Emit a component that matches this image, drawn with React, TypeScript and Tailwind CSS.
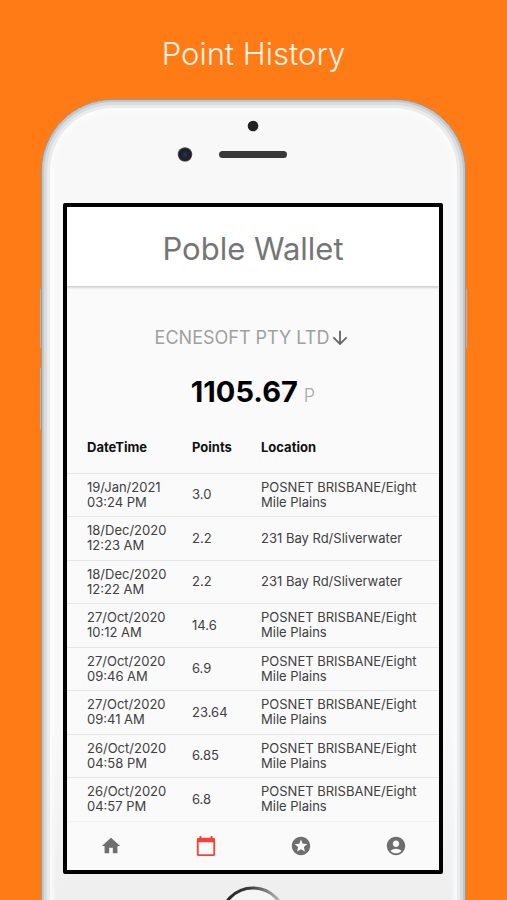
import { MdAccountCircle, MdArrowDownward, MdCalendarToday, MdHome, MdStars } from "react-icons/md";

const history = [
  { date: "19/Jan/2021", time: "03:24 PM", points: "3.0", location: "POSNET BRISBANE/Eight Mile Plains" },
  { date: "18/Dec/2020", time: "12:23 AM", points: "2.2", location: "231 Bay Rd/Sliverwater" },
  { date: "18/Dec/2020", time: "12:22 AM", points: "2.2", location: "231 Bay Rd/Sliverwater" },
  { date: "27/Oct/2020", time: "10:12 AM", points: "14.6", location: "POSNET BRISBANE/Eight Mile Plains" },
  { date: "27/Oct/2020", time: "09:46 AM", points: "6.9", location: "POSNET BRISBANE/Eight Mile Plains" },
  { date: "27/Oct/2020", time: "09:41 AM", points: "23.64", location: "POSNET BRISBANE/Eight Mile Plains" },
  { date: "26/Oct/2020", time: "04:58 PM", points: "6.85", location: "POSNET BRISBANE/Eight Mile Plains" },
  { date: "26/Oct/2020", time: "04:57 PM", points: "6.8", location: "POSNET BRISBANE/Eight Mile Plains" },
];

const tabs = [
  { label: "Home", Icon: MdHome },
  { label: "History", Icon: MdCalendarToday, active: true },
  { label: "Rewards", Icon: MdStars },
  { label: "Account", Icon: MdAccountCircle },
];

function Earpiece() {
  return (
    <svg viewBox="0 0 110 44" className="mt-[18px] mr-11 h-11 w-[110px]" aria-hidden="true">
      <defs>
        <radialGradient id="lens">
          <stop offset="0" stopColor="#26365c" />
          <stop offset="0.5" stopColor="#1c2030" />
          <stop offset="0.8" stopColor="#202024" />
          <stop offset="1" stopColor="#606468" />
        </radialGradient>
      </defs>
      <circle cx="76" cy="8" r="5.3" fill="#242324" />
      <circle cx="8" cy="36.5" r="7.3" fill="url(#lens)" />
      <rect x="42" y="33" width="68" height="7" rx="3.5" fill="#383938" />
    </svg>
  );
}

function HomeButton() {
  return (
    <svg viewBox="0 0 68 68" className="mt-3 size-[68px] shrink-0" aria-hidden="true">
      <defs>
        <linearGradient id="ring" x1="0" y1="0" x2="1" y2="0">
          <stop offset="0" stopColor="#222" />
          <stop offset="0.45" stopColor="#3a3a3a" />
          <stop offset="0.85" stopColor="#a5a5a5" />
          <stop offset="1" stopColor="#ccc" />
        </linearGradient>
      </defs>
      <circle cx="33" cy="34" r="32" fill="#f5f5f5" stroke="url(#ring)" strokeWidth="3" />
    </svg>
  );
}

function WalletScreen() {
  return (
    <div className="mr-[22px] ml-[21px] self-stretch rounded-[2px] border-4 border-black bg-[#fafafa]">
      <header className="flex h-20 items-center justify-center border-b border-[#d2d2d2] bg-white pt-1 shadow-[0_1px_2px_rgba(0,0,0,0.15)]">
        <h2 className="text-[31px] leading-9 text-[#757575]">Poble Wallet</h2>
      </header>

      <div className="flex flex-col items-center pt-[39px]">
        <button type="button" className="flex items-center text-[18px] leading-6 text-[#a0a0a0]">
          ECNESOFT PTY LTD
          <MdArrowDownward className="size-[22px] text-[#666]" />
        </button>
        <p className="mt-6 flex items-baseline gap-1.5 leading-9">
          <span className="text-[29px] font-bold text-black">1105.67</span>
          <span className="text-[18px] font-light text-[#a8a8a8]">P</span>
        </p>
      </div>

      <table className="mt-2 w-full table-fixed text-left text-[13px] leading-[15px] text-[#404040]">
        <thead>
          <tr className="h-[51px] border-b border-[#e6e6e6] text-[#111]">
            <th className="w-[125px] pl-5 font-bold">DateTime</th>
            <th className="w-[69px] font-bold">Points</th>
            <th className="font-bold">Location</th>
          </tr>
        </thead>
        <tbody>
          {history.map((row) => (
            <tr
              key={row.date + row.time}
              className="h-[43px] border-b border-[#e6e6e6] last:border-[#f1f1f1] even:h-[44px]"
            >
              <td className="pl-5">
                {row.date}
                <br />
                {row.time}
              </td>
              <td>{row.points}</td>
              <td className="pr-5">{row.location}</td>
            </tr>
          ))}
        </tbody>
      </table>

      <nav className="-mx-1 grid h-12 grid-cols-4">
        {tabs.map(({ label, Icon, active }) => (
          <button
            key={label}
            type="button"
            aria-label={label}
            className={`flex items-center justify-center ${active ? "text-[#f44336]" : "text-[#6e6e6e]"}`}
          >
            <Icon className="size-[22px]" />
          </button>
        ))}
      </nav>
    </div>
  );
}

export default function App() {
  return (
    <main className="flex h-screen flex-col overflow-hidden bg-[#ff7b15] font-['Inter',sans-serif]">
      <h1 className="pt-9 text-center text-[31px] leading-9 font-light text-[#fff3e6]">Point History</h1>

      <div className="relative mx-[41px] mt-[27px] h-[900px] shrink-0">
        {/* side buttons */}
        <span className="absolute top-[189px] -left-px h-[61px] w-1 rounded-sm bg-[#b9b3ae]" />
        <span className="absolute top-[268px] -left-px h-[63px] w-1 rounded-sm bg-[#b9b3ae]" />
        <span className="absolute top-[189px] -right-px h-[61px] w-1 rounded-sm bg-[#b9b3ae]" />

        <div className="relative flex h-full flex-col items-center rounded-[72px] border border-[#96989a] bg-linear-to-b from-[#f8f8f8] from-70% to-[#eeeeee] to-90% shadow-[inset_0_0_0_2px_#c3c6c8,inset_0_0_0_5px_#d9dddf,inset_0_0_0_8px_#e9ecec,inset_0_0_5px_11px_#fcfcfc]">
          <Earpiece />
          <div className="mt-[41px] flex w-full flex-col">
            <WalletScreen />
          </div>
          <HomeButton />
        </div>
      </div>
    </main>
  );
}
